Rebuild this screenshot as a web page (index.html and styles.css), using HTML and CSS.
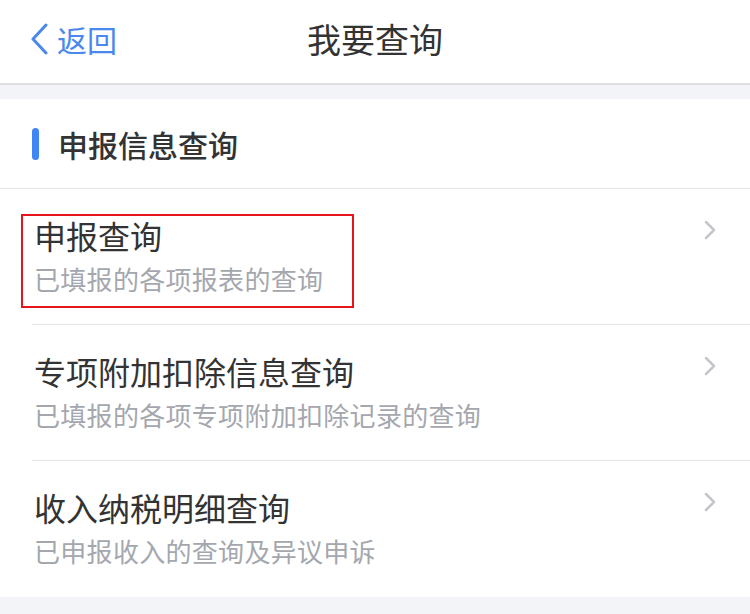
FILE: index.html
```html
<!DOCTYPE html>
<html lang="zh">
<head>
<meta charset="utf-8">
<link rel="stylesheet" href="styles.css">
</head>
<body>
<header class="navbar">
  <div class="nav-left">
    <svg class="back-icon" width="20" height="32" viewBox="0 0 20 32"><polyline points="16,2 3,16 16,30" fill="none" stroke="#4a88ee" stroke-width="3" stroke-linecap="round" stroke-linejoin="round"/></svg>
    <span class="back-text">返回</span>
  </div>
  <div class="nav-title">我要查询</div>
  <div class="nav-right"></div>
</header>
<div class="gap"></div>
<section class="card">
  <div class="card-head"><span class="bar"></span><span class="card-title">申报信息查询</span></div>
  <div class="item">
    <div class="item-text">
      <div class="item-title">申报查询</div>
      <div class="item-sub">已填报的各项报表的查询</div>
    </div>
    <svg class="chev" width="14" height="20" viewBox="0 0 14 20"><polyline points="3,2 11,10 3,18" fill="none" stroke="#c4c6cc" stroke-width="2.5" stroke-linecap="round" stroke-linejoin="round"/></svg>
    <div class="highlight"></div>
  </div>
  <div class="item">
    <div class="item-text">
      <div class="item-title">专项附加扣除信息查询</div>
      <div class="item-sub">已填报的各项专项附加扣除记录的查询</div>
    </div>
    <svg class="chev" width="14" height="20" viewBox="0 0 14 20"><polyline points="3,2 11,10 3,18" fill="none" stroke="#c4c6cc" stroke-width="2.5" stroke-linecap="round" stroke-linejoin="round"/></svg>
  </div>
  <div class="item">
    <div class="item-text">
      <div class="item-title">收入纳税明细查询</div>
      <div class="item-sub">已申报收入的查询及异议申诉</div>
    </div>
    <svg class="chev" width="14" height="20" viewBox="0 0 14 20"><polyline points="3,2 11,10 3,18" fill="none" stroke="#c4c6cc" stroke-width="2.5" stroke-linecap="round" stroke-linejoin="round"/></svg>
  </div>
</section>
</body>
</html>
```
FILE: styles.css
```css
html, body {
  margin: 0;
  padding: 0;
}
body {
  background: #f3f4f8;
  font-family: "Noto Sans CJK SC", "Noto Sans", sans-serif;
  color: #333;
  width: 750px;
  height: 614px;
  overflow: hidden;
}
.navbar {
  height: 85px;
  box-sizing: border-box;
  padding-bottom: 6px;
  background: #fff;
  border-bottom: 2px solid #dfdfe3;
  display: grid;
  grid-template-columns: 1fr auto 1fr;
  align-items: center;
}
.nav-left {
  display: flex;
  align-items: center;
  padding-left: 30px;
  gap: 7px;
}
.back-icon {
  display: block;
}
.back-text {
  color: #4a88ee;
  font-size: 30px;
  line-height: 40px;
}
.nav-title {
  font-size: 34px;
  line-height: 44px;
  color: #333;
}
.gap {
  height: 14px;
}
.card {
  background: #fff;
  height: 498px;
}
.card-head {
  height: 89px;
  border-bottom: 1px solid #e6e6e8;
  display: flex;
  align-items: center;
  padding-left: 32px;
  gap: 19px;
}
.bar {
  width: 7px;
  height: 32px;
  border-radius: 4px;
  background: #3f85f5;
}
.card-title {
  font-size: 30px;
  font-weight: 500;
  line-height: 40px;
  color: #333;
}
.item {
  position: relative;
  margin-left: 32px;
  height: 135px;
  display: flex;
  align-items: flex-start;
  justify-content: space-between;
  padding-right: 33px;
  box-sizing: border-box;
}
.item + .item {
  border-top: 1px solid #e6e6e8;
  height: 136px;
}
.item-text {
  padding-left: 2px;
  padding-top: 24px;
}
.item-title {
  font-size: 32px;
  line-height: 44px;
  color: #333;
}
.item-sub {
  font-size: 26px;
  letter-spacing: 0.3px;
  line-height: 36px;
  color: #a4a7ae;
  margin-top: 4px;
}
.chev {
  margin-top: 31px;
}
.highlight {
  position: absolute;
  left: -11px;
  top: 25px;
  width: 333px;
  height: 94px;
  border: 2px solid #e8141c;
  box-sizing: border-box;
}
```
